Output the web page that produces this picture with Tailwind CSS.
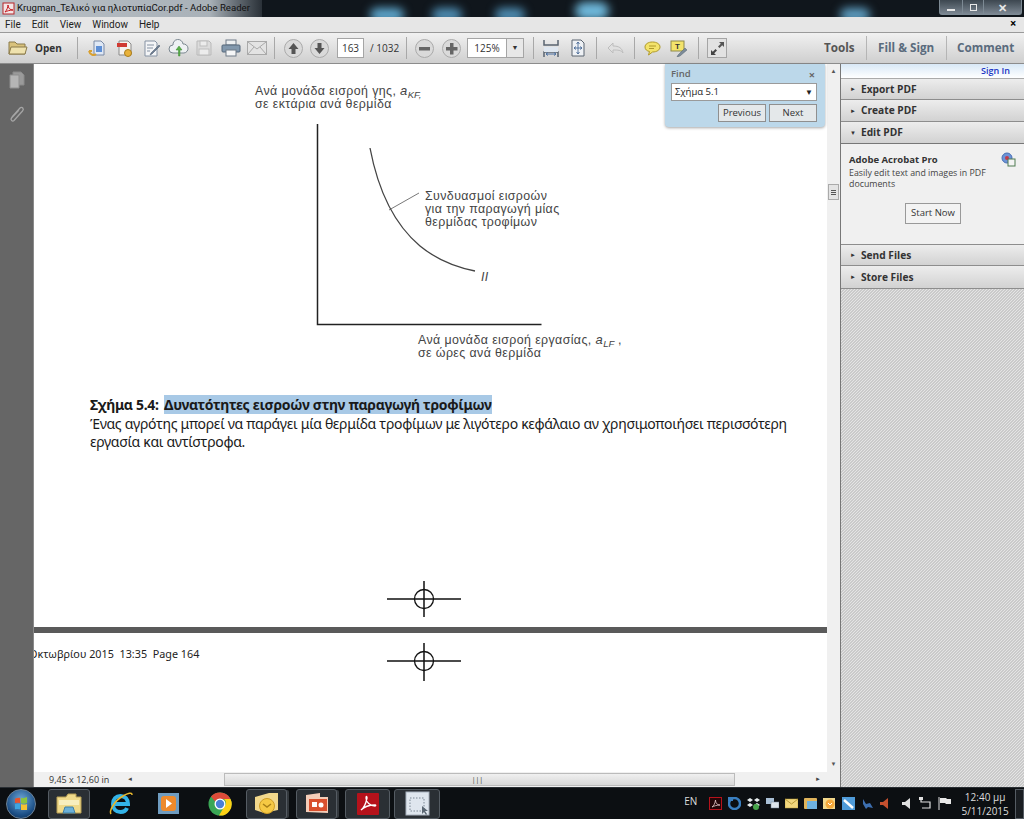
<!DOCTYPE html>
<html lang="el">
<head>
  <meta charset="UTF-8"/>
  <title>Krugman - Adobe Reader</title>
  <script src="https://cdn.jsdelivr.net/npm/@tailwindcss/browser@4"></script>
</head>
<body class="w-[1024px] h-[819px] overflow-hidden flex flex-col bg-white font-['Open_Sans',sans-serif] text-[#333]">

  <!-- Title bar -->
  <div class="relative h-[17px] shrink-0 overflow-hidden bg-[#10161c] flex items-center">
    <div class="absolute left-0 top-0 h-[17px] w-[262px] bg-gradient-to-r from-[#b9c0c6] via-[#a9b1b8] via-80% to-[#2a3138]"></div>
    <div class="absolute left-[370px] top-[8px] w-[34px] h-[14px] rounded-full bg-[#5fa9d0] blur-[5px]"></div>
    <div class="absolute left-[432px] top-[8px] w-[30px] h-[14px] rounded-full bg-[#4f8fb5] blur-[5px]"></div>
    <div class="absolute left-[495px] top-[8px] w-[30px] h-[14px] rounded-full bg-[#4f8fb5] blur-[5px]"></div>
    <div class="absolute left-[575px] top-[2px] w-[34px] h-[18px] rounded-full bg-[#6fb9dc] blur-[5px]"></div>
    <div class="absolute left-[840px] top-[8px] w-[30px] h-[14px] rounded-full bg-[#5fa0c4] blur-[5px]"></div>
    <svg class="relative ml-[2px] shrink-0" width="13" height="13" viewBox="0 0 13 13"><rect x="1" y="1" width="11" height="11" fill="#f3e6e6" stroke="#b8262a"/><path d="M3 10c2-2 3-5 3-7 0 3 2 5 5 5-3 0-6 1-8 2z" fill="none" stroke="#c4161c"/></svg>
    <span class="relative ml-[2px] text-[9.600px] font-['Roboto',sans-serif] text-[#111] whitespace-nowrap">Krugman_Τελικό για ηλιοτυπίαCor.pdf - Adobe Reader</span>
    <div class="absolute left-[939px] top-0 h-[15px] w-[83px] flex border border-t-0 border-[#7d8a94] rounded-b-[3px] bg-gradient-to-b from-[#3d4750] to-[#7d8893]">
      <div class="w-[23px] flex items-end justify-center pb-[3px] border-r border-[#7d8a94]"><div class="w-[8px] h-[2px] bg-[#e8e8e8]"></div></div>
      <div class="w-[21px] flex items-center justify-center border-r border-[#7d8a94]"><div class="w-[7px] h-[7px] border border-[#e8e8e8]"></div></div>
      <div class="flex-1 flex items-center justify-center text-[11px] leading-none font-bold text-[#e8e8e8]">✕</div>
    </div>
  </div>

  <!-- Menu bar -->
  <div class="relative h-[16px] shrink-0 bg-[#e6e6e6] border-b border-[#9a9a9a] flex items-center pl-[5px] gap-[11px] text-[10px] font-['Roboto',sans-serif] text-[#222]">
    <span>File</span><span>Edit</span><span>View</span><span>Window</span><span>Help</span>
    <span class="absolute right-[8px] top-[1px] text-[11px] font-bold leading-none text-black">×</span>
  </div>

  <!-- Toolbar -->
  <div class="h-[31px] shrink-0 bg-gradient-to-b from-[#f1f1f1] to-[#cfcfcf] border-b border-[#8c8c8c] flex items-center text-[10px]">
    <div class="w-[35px] flex justify-center pl-[1px]">
      <svg width="20" height="16" viewBox="0 0 20 16"><path d="M1 14V2h6l2 2h8v10z" fill="#d9c27c" stroke="#8a7a4a"/><path d="M1 14l2-7h16l-2 7z" fill="#efe2ae" stroke="#8a7a4a"/></svg>
    </div>
    <span class="font-bold text-[10px] w-[42px]">Open</span>
    <div class="w-px h-[22px] bg-[#a8a8a8]"></div>
    <div class="ml-[6px] w-[27px] flex justify-center">
      <svg width="19" height="19" viewBox="0 0 19 19"><path d="M6 2h7l3 3v11H6z" fill="#dfe8f5" stroke="#7a8aa5"/><rect x="8" y="7" width="6" height="6" fill="#5d8fd6"/><path d="M1 12c1 4 5 5 7 3M1 12l3 0" fill="none" stroke="#d8a030" stroke-width="2"/></svg>
    </div>
    <div class="w-[27px] flex justify-center">
      <svg width="19" height="19" viewBox="0 0 19 19"><path d="M4 2h9l3 3v11H4z" fill="#f5f2ee" stroke="#8a8a8a"/><rect x="2" y="4" width="10" height="4" fill="#d03a32"/><circle cx="13" cy="14" r="3.500" fill="#e9b23a" stroke="#a97d1c"/></svg>
    </div>
    <div class="w-[27px] flex justify-center">
      <svg width="19" height="19" viewBox="0 0 19 19"><path d="M3 2h10l2 2v13H3z" fill="#f4f5f7" stroke="#8592a3"/><path d="M5 6h7M5 9h6M5 12h3" stroke="#8592a3"/><path d="M9 14l8-8 1 1-8 8-2 1z" fill="#6c7c90" stroke="#47566a" stroke-width=".5"/></svg>
    </div>
    <div class="w-[26px] flex justify-center">
      <svg width="21" height="18" viewBox="0 0 21 18"><path d="M5 14a4 4 0 0 1 0-8 5 5 0 0 1 10-1 4.500 4.500 0 0 1 1 9z" fill="#eef1f3" stroke="#7b8790"/><path d="M10.500 17V11H8l3-4 3 4h-2v6z" fill="#5bb04a" stroke="#3b8a30" stroke-width=".5"/></svg>
    </div>
    <div class="w-[26px] flex justify-center">
      <svg width="16" height="16" viewBox="0 0 16 16"><path d="M1 1h12l2 2v12H1z" fill="#dcdcdc" stroke="#b9b9b9"/><rect x="4" y="1" width="7" height="5" fill="#ececec" stroke="#bdbdbd"/><rect x="3" y="9" width="10" height="6" fill="#ececec" stroke="#bdbdbd"/></svg>
    </div>
    <div class="w-[27px] flex justify-center">
      <svg width="20" height="18" viewBox="0 0 20 18"><rect x="5" y="1" width="10" height="5" fill="#eef0f2" stroke="#6f7b87"/><rect x="1" y="6" width="18" height="7" rx="1" fill="#8298ad" stroke="#55677a"/><rect x="5" y="11" width="10" height="6" fill="#f5f6f7" stroke="#6f7b87"/></svg>
    </div>
    <div class="w-[26px] flex justify-center">
      <svg width="20" height="14" viewBox="0 0 20 14"><rect x=".5" y=".5" width="19" height="13" fill="#e3e3e3" stroke="#a9a9a9"/><path d="M1 1l9 7 9-7M1 13l6-7M19 13l-6-7" fill="none" stroke="#a9a9a9"/></svg>
    </div>
    <div class="ml-[4px] w-px h-[22px] bg-[#a8a8a8]"></div>
    <div class="ml-[5px] w-[26px] flex justify-center">
      <svg width="19" height="19" viewBox="0 0 19 19"><circle cx="9.500" cy="9.500" r="9" fill="#dadada" stroke="#aaa"/><path d="M9.500 4l5 6h-3v5h-4v-5h-3z" fill="#555"/></svg>
    </div>
    <div class="w-[26px] flex justify-center">
      <svg width="19" height="19" viewBox="0 0 19 19"><circle cx="9.500" cy="9.500" r="9" fill="#dadada" stroke="#aaa"/><path d="M9.500 15l5-6h-3V4h-4v5h-3z" fill="#555"/></svg>
    </div>
    <div class="ml-[5px] w-[27px] h-[20px] bg-white border border-[#a5a5a5] flex items-center justify-center text-[10px]">163</div>
    <span class="ml-[6px] w-[36px] text-[10px]">/ 1032</span>
    <div class="w-px h-[22px] bg-[#a8a8a8]"></div>
    <div class="ml-[4px] w-[27px] flex justify-center">
      <svg width="19" height="19" viewBox="0 0 19 19"><circle cx="9.500" cy="9.500" r="9" fill="#dadada" stroke="#aaa"/><rect x="4" y="8" width="11" height="3.500" fill="#666"/></svg>
    </div>
    <div class="w-[27px] flex justify-center">
      <svg width="19" height="19" viewBox="0 0 19 19"><circle cx="9.500" cy="9.500" r="9" fill="#dadada" stroke="#aaa"/><path d="M8 4h3.500v4H15.500v3.500H11.500V15.500H8V11.500H4V8h4z" fill="#666"/></svg>
    </div>
    <div class="ml-[2px] w-[57px] h-[20px] bg-white border border-[#a5a5a5] flex items-center text-[10px]">
      <span class="w-[38px] text-center">125%</span>
      <span class="flex-1 h-full border-l border-[#a5a5a5] bg-[#e8e8e8] flex items-center justify-center text-[7px] text-[#333]">▼</span>
    </div>
    <div class="ml-[9px] w-px h-[22px] bg-[#a8a8a8]"></div>
    <div class="w-[34px] flex justify-center">
      <svg width="16" height="19" viewBox="0 0 16 19"><path d="M1 1v5h14V1M1 18v-5h14v5" fill="none" stroke="#5a6470" stroke-width="1.500"/><path d="M1 8h14v5H1z" fill="#dfe7f0"/><path d="M3 15h10M3 15l2-1.500M3 15l2 1.500M13 15l-2-1.500M13 15l-2 1.500" stroke="#4a6fa0" fill="none"/></svg>
    </div>
    <div class="w-[20px] flex justify-center">
      <svg width="14" height="18" viewBox="0 0 14 18"><path d="M1 1h9l3 3v13H1z" fill="#eef1f5" stroke="#5a6470"/><path d="M7 3v12M3 9h8M7 3L5.500 5M7 3l1.500 2M7 15l-1.500-2M7 15l1.500-2M3 9l2-1.500M3 9l2 1.500M11 9L9 7.500M11 9l-2 1.500" fill="none" stroke="#3b5f8f" stroke-width=".8"/></svg>
    </div>
    <div class="ml-[8px] w-px h-[22px] bg-[#a8a8a8]"></div>
    <div class="w-[37px] flex justify-center">
      <svg width="18" height="14" viewBox="0 0 18 14"><path d="M1 7l5-5v3c6 0 9 2 10 7-2-3-5-3-10-3v3z" fill="#e0e0e0" stroke="#bdbdbd"/></svg>
    </div>
    <div class="w-px h-[22px] bg-[#a8a8a8]"></div>
    <div class="w-[34px] flex justify-center">
      <svg width="17" height="15" viewBox="0 0 17 15"><path d="M8.500 1c4.500 0 7.500 2.200 7.500 5s-3 5-7.500 5l-4 3 1-3.500C3 10 1 8.500 1 6c0-2.800 3-5 7.500-5z" fill="#f3e36b" stroke="#b09a2a"/><path d="M5 5h7M5 7.500h5" stroke="#b09a2a"/></svg>
    </div>
    <div class="w-[20px] flex justify-center">
      <svg width="18" height="17" viewBox="0 0 18 17"><rect x="1" y="1" width="13" height="10" fill="#f3e36b" stroke="#8f8a4a"/><text x="7.500" y="9" font-size="8" font-weight="700" text-anchor="middle" fill="#333" font-family="Liberation Sans, sans-serif">T</text><path d="M8 15l7-7 2 2-7 6-3 1z" fill="#7c8b99" stroke="#55636f" stroke-width=".5"/></svg>
    </div>
    <div class="ml-[9px] w-px h-[22px] bg-[#a8a8a8]"></div>
    <div class="ml-[8px] w-[20px] h-[20px] border border-[#a5a5a5] bg-[#e2e2e2] flex items-center justify-center">
      <svg width="15" height="15" viewBox="0 0 15 15"><path d="M9 1h5v5l-1.800-1.800L9.500 7 8 5.500l2.800-2.700z" fill="#555"/><path d="M1 14V9l1.800 1.800L5.500 8 7 9.500l-2.800 2.700L6 14z" fill="#444"/></svg>
    </div>
    <span class="ml-[97px] font-bold text-[11.700px] text-[#555] w-[31px] whitespace-nowrap">Tools</span>
    <div class="ml-[11px] w-px h-[24px] bg-[#b5b5b5]"></div>
    <span class="ml-[11px] font-bold text-[11.700px] text-[#5a6b7d] w-[57px] whitespace-nowrap">Fill &amp; Sign</span>
    <div class="ml-[11px] w-px h-[24px] bg-[#b5b5b5]"></div>
    <span class="ml-[10px] font-bold text-[11.700px] text-[#5a6b7d] whitespace-nowrap">Comment</span>
  </div>

  <!-- Main area -->
  <div class="flex-1 min-h-0 flex">
    <!-- Left rail -->
    <div class="w-[34px] shrink-0 bg-[#666666] border-r border-[#8a8a8a] flex flex-col items-center pt-[7px] gap-[15px]">
      <svg width="18" height="18" viewBox="0 0 18 18"><path d="M5 1h8l3 3v10H5z" fill="#9a9a9a" stroke="#8a8a8a"/><path d="M2 4h9v13H2z" fill="#b5b5b5" stroke="#8f8f8f"/></svg>
      <svg width="18" height="20" viewBox="0 0 18 20"><path d="M4 13l8-9c2-2 4.500 1 2.500 3L6 16.500c-1.500 1.500-4 -.5-2.500-2.500L11 6" fill="none" stroke="#a5a5a5" stroke-width="1.300"/></svg>
    </div>

    <!-- Document column -->
    <div class="w-[806px] shrink-0 flex flex-col relative">
      <div class="flex-1 min-h-0 flex">
        <div class="w-[793px] shrink-0 bg-white overflow-hidden text-[#111]">
          <!-- Page figure -->
          <svg class="block font-['Liberation_Sans',sans-serif]" width="793" height="332" viewBox="34 64 793 332" fill="#444" font-size="12.400" letter-spacing=".4">
            <text x="255" y="95">Ανά μονάδα εισροή γης, <tspan font-style="italic" font-size="13">a</tspan><tspan font-style="italic" font-size="9.500" dy="3" letter-spacing="0">KF,</tspan></text>
            <text x="255" y="108">σε εκτάρια ανά θερμίδα</text>
            <path d="M317.500 124V324.500H541.500" fill="none" stroke="#222" stroke-width="1.500"/>
            <path d="M370 148C378 190 395 225 420 246C437 260 455 267 475 271" fill="none" stroke="#444" stroke-width="1.300"/>
            <path d="M389 210L419 193" stroke="#555" stroke-width=".8"/>
            <text x="425" y="200">Συνδυασμοί εισροών</text>
            <text x="425" y="213">για την παραγωγή μίας</text>
            <text x="425" y="226">θερμίδας τροφίμων</text>
            <text x="481" y="281" font-style="italic">II</text>
            <text x="418" y="344">Ανά μονάδα εισροή εργασίας, <tspan font-style="italic" font-size="13">a</tspan><tspan font-style="italic" font-size="9.500" dy="3" letter-spacing="0">LF</tspan><tspan dy="-3"> ,</tspan></text>
            <text x="418" y="357">σε ώρες ανά θερμίδα</text>
          </svg>
          <!-- Caption -->
          <div class="ml-[56px] w-[720px] text-[14px] leading-[18.500px] font-['Noto_Sans',sans-serif] tracking-[-0.31px] text-[#1a1a1a]">
            <p class="whitespace-nowrap"><b>Σχήμα 5.4:</b> <b class="ml-[2px] bg-[#a8c9e6]">Δυνατότητες εισροών στην παραγωγή τροφίμων</b></p>
            <p>Ένας αγρότης μπορεί να παράγει μία θερμίδα τροφίμων με λιγότερο κεφάλαιο αν χρησιμοποιήσει περισσότερη εργασία και αντίστροφα.</p>
          </div>
          <!-- Crop mark -->
          <svg class="block ml-[353px] mt-[128px]" width="76" height="38" viewBox="0 0 76 38"><path d="M0 19H74M37 1V37" stroke="#111" stroke-width="1.500"/><circle cx="37" cy="19" r="9.500" fill="none" stroke="#111" stroke-width="1.300"/></svg>
          <div class="mt-[9px] h-[6px] bg-[#5a5a5a]"></div>
          <!-- Next page slug -->
          <div class="relative h-[139px] overflow-hidden">
            <span class="absolute left-[-5px] top-[13px] text-[10.800px] font-['Noto_Sans',sans-serif] whitespace-nowrap text-[#222]">Οκτωβρίου 2015&nbsp; 13:35&nbsp; Page 164</span>
            <svg class="absolute left-[353px] top-[9px]" width="76" height="40" viewBox="0 0 76 40"><path d="M0 19H74M37 1V39" stroke="#111" stroke-width="1.500"/><circle cx="37" cy="19" r="9.500" fill="none" stroke="#111" stroke-width="1.300"/></svg>
          </div>
        </div>
        <!-- Vertical scrollbar -->
        <div class="w-[13px] shrink-0 bg-[#f0f0f0] relative flex flex-col items-center justify-between py-[3px] text-[6px] text-[#555]">
          <span>▲</span>
          <div class="absolute left-[1px] top-[120px] w-[11px] h-[16px] bg-[#e4e4e4] border border-[#aaa] flex flex-col items-center justify-center gap-[1px]">
            <div class="w-[5px] h-px bg-[#555]"></div><div class="w-[5px] h-px bg-[#555]"></div><div class="w-[5px] h-px bg-[#555]"></div>
          </div>
          <span>▼</span>
        </div>
      </div>
      <!-- Status and horizontal scrollbar -->
      <div class="h-[15px] shrink-0 bg-[#f0f0f0] flex items-center text-[9px]">
        <span class="ml-[15px] w-[78px] whitespace-nowrap">9,45 x 12,60 in</span>
        <span class="text-[6px] text-[#444]">◄</span>
        <div class="ml-[91px] w-[511px] h-[13px] bg-gradient-to-b from-[#f0f0f0] to-[#d8d8d8] border border-[#bbb] flex items-center justify-center pr-[4px] text-[7px] leading-none">|||</div>
        <span class="ml-[80px] text-[6px] text-[#444]">►</span>
      </div>

      <!-- Find panel -->
      <div class="absolute left-[631px] top-0 w-[160px] h-[63px] bg-[#bcd8ea] rounded-b-[4px] shadow-[0_1px_3px_rgba(0,0,0,.35)] pl-[6px] pr-[8px] text-[9.500px]">
        <div class="h-[19px] flex items-center justify-between pt-[2px] pr-[2px] text-[#666]"><span class="font-semibold">Find</span><b class="text-[11px] leading-none">×</b></div>
        <div class="h-[18px] bg-white border border-[#9a9a9a] flex items-center justify-between px-[3px] text-[#222]"><span>Σχήμα 5.1</span><span class="text-[8px]">▼</span></div>
        <div class="mt-[3px] flex justify-end gap-[3px] text-[#333]">
          <div class="w-[48px] h-[18px] bg-[#e4e8ea] border border-[#8f8f8f] flex items-center justify-center">Previous</div>
          <div class="w-[48px] h-[18px] bg-[#e4e8ea] border border-[#8f8f8f] flex items-center justify-center">Next</div>
        </div>
      </div>
    </div>

    <!-- Right panel -->
    <div class="w-[184px] shrink-0 border-l border-[#777] flex flex-col bg-[repeating-linear-gradient(135deg,#cacaca_0,#cacaca_0.900px,#e4e4e4_0.900px,#e4e4e4_2.1213px)]">
      <div class="h-[15px] shrink-0 bg-gradient-to-b from-[#d8e8f6] to-white border-b border-[#aaa] text-right pr-[14px] text-[9px] leading-[14px] font-semibold text-[#1a35c4]">Sign In</div>
      <div class="h-[21px] shrink-0 pt-[1px] bg-gradient-to-b from-[#ededed] to-[#d2d2d2] border-b border-[#8d8d8d] flex items-center pl-[9px] gap-[5px] text-[10.200px] font-bold"><span class="text-[6px]">►</span>Export PDF</div>
      <div class="h-[22px] shrink-0 pt-[1px] bg-gradient-to-b from-[#ededed] to-[#d2d2d2] border-b border-[#8d8d8d] flex items-center pl-[9px] gap-[5px] text-[10.200px] font-bold"><span class="text-[6px]">►</span>Create PDF</div>
      <div class="h-[22px] shrink-0 pt-[1px] bg-gradient-to-b from-[#ededed] to-[#d2d2d2] border-b border-[#777] flex items-center pl-[9px] gap-[5px] text-[10.200px] font-bold"><span class="text-[6px]">▼</span>Edit PDF</div>
      <div class="h-[101px] shrink-0 bg-[#f0f0f0] border-b border-[#8d8d8d] px-[8px] pt-[9px] relative">
        <svg class="absolute right-[8px] top-[8px]" width="15" height="15" viewBox="0 0 15 15"><circle cx="6" cy="6" r="5" fill="#6d93d6" stroke="#476fb5"/><circle cx="6" cy="6" r="2" fill="#c63a4a"/><rect x="7" y="7" width="7" height="7" fill="#f3f3f3" stroke="#4e7a50"/></svg>
        <p class="font-bold text-[9.500px] leading-[13px]">Adobe Acrobat Pro</p>
        <p class="mt-[2px] text-[8.800px] leading-[10.500px] text-[#444] w-[150px]">Easily edit text and images in PDF documents</p>
        <div class="mt-[14px] ml-[56px] w-[56px] h-[21px] bg-[#f3f3f3] border border-[#999] flex items-center justify-center text-[9.500px]">Start Now</div>
      </div>
      <div class="h-[21px] shrink-0 pt-[1px] bg-gradient-to-b from-[#ededed] to-[#d2d2d2] border-b border-[#8d8d8d] flex items-center pl-[9px] gap-[5px] text-[10.200px] font-bold"><span class="text-[6px]">►</span>Send Files</div>
      <div class="h-[23px] shrink-0 pt-[1px] bg-gradient-to-b from-[#ededed] to-[#d2d2d2] border-b border-[#8d8d8d] flex items-center pl-[9px] gap-[5px] text-[10.200px] font-bold"><span class="text-[6px]">►</span>Store Files</div>
    </div>
  </div>

  <!-- Taskbar -->
  <div class="h-[32px] shrink-0 bg-[#0c0f12] border-t border-[#2a2f34] flex items-center text-white">
    <!-- Start orb -->
    <div class="ml-[6px] w-[30px] h-[30px] rounded-full bg-[radial-gradient(circle_at_50%_35%,#6fa8d8,#1c4f86_65%,#0b2748)] border border-[#6d8296] flex items-center justify-center">
      <svg width="14" height="13" viewBox="0 0 16 15"><path d="M1 2q3-1.500 6-1v6q-3-.5-6 0z" fill="#e8532c"/><path d="M8 1q3 1 7-1v7q-4 1.500-7 0z" fill="#8cc43e"/><path d="M1 8q3-.5 6 0v6q-3-.5-6 0z" fill="#3ea5e0"/><path d="M8 8q3 1.500 7 0v7q-4 1.500-7 0z" fill="#f5c231"/></svg>
    </div>
    <!-- Explorer -->
    <div class="ml-[12px] w-[42px] h-[30px] rounded-[3px] border border-[#555c63] bg-[#2a2f34] flex items-center justify-center">
      <svg width="26" height="24" viewBox="0 0 26 24"><path d="M1 21V5h9l2-3h8v3h5v16z" fill="#efd98a" stroke="#b79f55"/><rect x="3" y="8" width="20" height="5" fill="#f8eebe"/><path d="M7 21l2-6h8l2 6z" fill="#6bb0d8" stroke="#3f7ea5"/></svg>
    </div>
    <!-- IE -->
    <div class="ml-[18px] w-[26px] flex justify-center">
      <svg width="25" height="27" viewBox="0 0 25 27"><path d="M5 14h15c0-5-3-8-7.500-8S5 9 5 14s3 8 7.500 8c3 0 5.500-1.500 6.500-4" fill="none" stroke="#33b3e8" stroke-width="4"/><path d="M3 24c-2-3 3-13 12-18 5-3 9-4 9-1" fill="none" stroke="#e8b62c" stroke-width="1.500"/></svg>
    </div>
    <!-- Media player -->
    <div class="ml-[16px] w-[38px] flex justify-center">
      <svg width="21" height="21" viewBox="0 0 21 21"><rect width="21" height="21" fill="#6f9cc0"/><rect x="3" y="3" width="15" height="15" rx="3" fill="#ee8a2c"/><path d="M8 6l6 4.500L8 15z" fill="#fff"/></svg>
    </div>
    <!-- Chrome -->
    <div class="ml-[20px] w-[24px] flex justify-center">
      <svg width="24" height="24" viewBox="0 0 24 24"><circle cx="12" cy="12" r="11.500" fill="#3aa655"/><path d="M12 .5A11.500 11.500 0 0 1 22.500 7H12a5 5 0 0 0-4.500 3L3 4.500A11.500 11.500 0 0 1 12 .5z" fill="#dd4b39"/><path d="M22.500 7A11.500 11.500 0 0 1 11 23.500L16 15a5 5 0 0 0 0-8z" fill="#fcd116"/><circle cx="12" cy="12" r="5.500" fill="#fff"/><circle cx="12" cy="12" r="4.200" fill="#4a7fd6"/></svg>
    </div>
    <!-- Outlook -->
    <div class="ml-[14px] w-[41px] h-[30px] rounded-[3px] border border-[#555c63] bg-[#2a2f34] shadow-[3px_0_0_-1px_#33383d] flex items-center justify-center">
      <svg width="25" height="24" viewBox="0 0 25 24"><path d="M1 5l14-4h9v17l-14 3-9-3z" fill="#f2d88c"/><circle cx="13" cy="14" r="7.500" fill="#f6c944" stroke="#cf9d24"/><path d="M9 12l4 3 4-3" fill="none" stroke="#a87f18" stroke-width="1.500"/></svg>
    </div>
    <!-- PowerPoint -->
    <div class="ml-[9px] w-[42px] h-[30px] rounded-[3px] border border-[#555c63] bg-[#2a2f34] shadow-[3px_0_0_-1px_#33383d] flex items-center justify-center">
      <svg width="25" height="24" viewBox="0 0 25 24"><path d="M2 3l14-2v4h8v16l-22-1z" fill="#f4cdb8"/><rect x="5" y="7" width="18" height="12" fill="#d9502e"/><rect x="8" y="10" width="5" height="5" fill="#fff"/><circle cx="17" cy="13" r="2.500" fill="#fff"/></svg>
    </div>
    <!-- Acrobat -->
    <div class="ml-[8px] w-[45px] h-[30px] rounded-[3px] border border-[#555c63] bg-[#2a2f34] flex items-center justify-center">
      <svg width="22" height="22" viewBox="0 0 22 22"><rect width="22" height="22" rx="1" fill="#b5121b"/><path d="M4 17c3-2 5-7 6-12 0-2-1-2-1 0 0 4 4 8 9 8 1 0 1-1 0-1-4 0-10 1-14 5z" fill="none" stroke="#fff" stroke-width="1.300"/></svg>
    </div>
    <!-- Snipping -->
    <div class="ml-[4px] w-[46px] h-[30px] rounded-[3px] border border-[#555c63] bg-[#2a2f34] flex items-center justify-center">
      <svg width="25" height="25" viewBox="0 0 25 25"><rect x="1" y="1" width="23" height="23" fill="#dfe6ee" stroke="#a8b2bd"/><rect x="5" y="7" width="14" height="13" fill="none" stroke="#7b8794" stroke-dasharray="1.500 1.500"/><path d="M17 15v8l2-2 2 3 1-1-2-3h3z" fill="#5b6773"/></svg>
    </div>

    <!-- Tray -->
    <span class="ml-[244px] text-[10px] w-[19px] -mt-[5px] text-[#ddd]">EN</span>
    <div class="ml-[6px] flex items-center gap-[6px]">
      <svg width="13" height="13" viewBox="0 0 13 13"><rect x=".5" y=".5" width="12" height="12" fill="#220608" stroke="#b5121b"/><path d="M3 10c2-1 3-4 3.500-7C6.500 6 8 8 11 8c-3 0-6 1-8 2z" fill="none" stroke="#e6c9c9" stroke-width=".8"/></svg>
      <svg width="13" height="13" viewBox="0 0 13 13"><circle cx="6.500" cy="6.500" r="5.500" fill="none" stroke="#3a7fc0" stroke-width="2.500"/><rect x="0" y="0" width="5" height="4" fill="#3a7fc0"/></svg>
      <svg width="13" height="13" viewBox="0 0 13 13"><path d="M3 1l3 2-3 2-3-2zM10 1l3 2-3 2-3-2zM3 6l3 2-3 2-3-2zM10 6l3 2-3 2-3-2z" fill="#e8eef0"/><circle cx="9" cy="10" r="3" fill="#47a54a"/></svg>
      <svg width="13" height="13" viewBox="0 0 13 13"><rect x="0" y="1" width="8" height="6" fill="#a9c0d6"/><rect x="5" y="5" width="8" height="6" fill="#dde5ec" stroke="#6f8296" stroke-width=".5"/></svg>
      <svg width="13" height="13" viewBox="0 0 13 13"><rect x="0" y="2" width="13" height="9" fill="#f2d77e" stroke="#b99a3a" stroke-width=".5"/><path d="M0 2l6.500 5 6.500-5" fill="none" stroke="#b99a3a"/></svg>
      <svg width="13" height="13" viewBox="0 0 13 13"><rect x="0" y="1" width="13" height="11" rx="1" fill="#e0b45c"/><rect x="3" y="4" width="10" height="8" fill="#6fb2e0"/></svg>
      <svg width="13" height="13" viewBox="0 0 13 13"><rect x="0" y="1" width="12" height="11" fill="#f2d88c"/><circle cx="7" cy="7" r="4.500" fill="#f4a83a"/><path d="M5 6l2 2 2-2" stroke="#fff" fill="none"/></svg>
      <svg width="13" height="13" viewBox="0 0 13 13"><rect width="13" height="13" fill="#4f9bd9"/><path d="M2 3l9 8" stroke="#fff" stroke-width="2.500"/></svg>
      <svg width="13" height="13" viewBox="0 0 13 13"><path d="M2 2l3 5 4-1 3 5-5-1-2 2-3-5z" fill="#3d6fb0"/></svg>
      <svg class="-ml-[1px]" width="11" height="13" viewBox="0 0 11 13"><path d="M1 5h3l5-4v11L4 8H1z" fill="#c5502f"/></svg>
      <svg class="ml-[6px]" width="9" height="13" viewBox="0 0 9 13"><path d="M0 5h3l5-4v11L3 8H0z" fill="#e0e0e0"/></svg>
      <svg class="ml-[2px]" width="13" height="13" viewBox="0 0 13 13"><path d="M2 1v4h9v6H3" fill="none" stroke="#e0e0e0" stroke-width="1.200"/><rect x="0" y="0" width="4" height="3" fill="#e0e0e0"/></svg>
      <svg width="13" height="13" viewBox="0 0 13 13"><path d="M1 0v13" stroke="#e0e0e0"/><path d="M2 1h6l1 1h4v5H8L7 6H2z" fill="#e8e8e8"/></svg>
    </div>
    <div class="ml-[6px] w-[56px] text-center text-[10px] leading-[14px] text-[#ddd]">12:40 μμ<br/>5/11/2015</div>
    <div class="ml-[2px] w-[9px] h-[30px] border border-[#555c63] bg-[#1a1e22]"></div>
  </div>
</body>
</html>
